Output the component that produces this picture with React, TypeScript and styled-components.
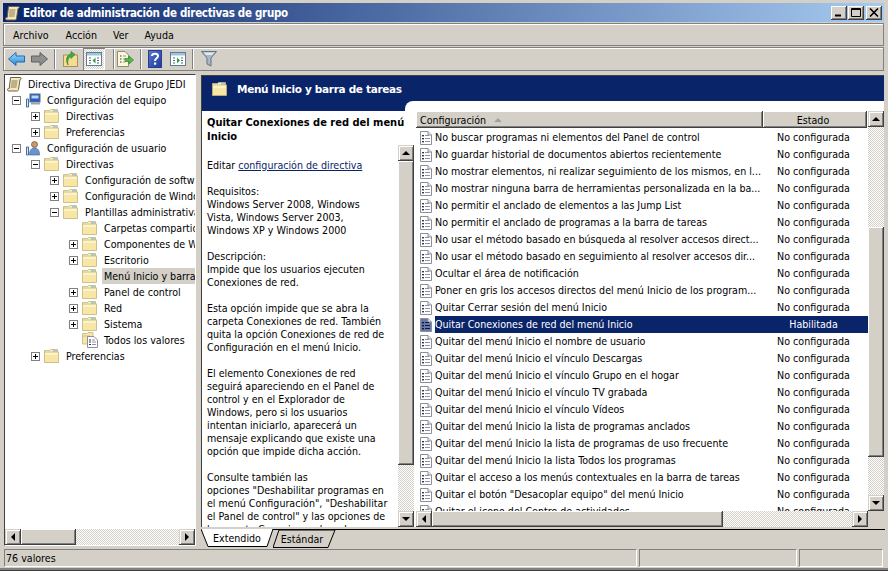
import React, { ReactElement } from 'react'
import styled, { createGlobalStyle } from 'styled-components'

const FACE = '#d4d0c8'
const NAVY = '#0a246a'
const UI_FONT = '"DejaVu Sans Condensed", "DejaVu Sans", sans-serif'

const GlobalStyle = createGlobalStyle`
    html, body {
        margin: 0;
        padding: 0;
        background: ${FACE};
    }
    * {
        box-sizing: border-box;
    }
`

const Window = styled.div`
    width: 888px;
    height: 571px;
    display: flex;
    flex-direction: column;
    padding: 3px 4px 3px 3px;
    background: ${FACE};
    border-bottom: 1px solid #404040;
    box-shadow: inset 0 -2px 0 #808080;
    font: 10.6px ${UI_FONT};
    color: #000;
    overflow: hidden;
`
const TitleBar = styled.div`
    flex: none;
    height: 19px;
    display: flex;
    align-items: center;
    padding: 0 2px 0 2px;
    gap: 3px;
    background: linear-gradient(90deg, ${NAVY} 0%, #a6caf0 100%);
`
const TitleText = styled.div`
    flex: 1;
    color: #fff;
    font: bold 11.5px ${UI_FONT};
    letter-spacing: -0.3px;
    white-space: nowrap;
`
const CaptionGroup = styled.div`
    display: flex;
    gap: ${(props: { $gap?: number }): string => (props.$gap || 1) + 'px'};
`
const CaptionButton = styled.div`
    width: 16px;
    height: 14px;
    display: flex;
    align-items: center;
    justify-content: center;
    background: ${FACE};
    box-shadow: inset -1px -1px 0 #404040, inset 1px 1px 0 #fff, inset -2px -2px 0 #808080;
`
const Band = styled.div`
    flex: none;
    height: ${(props: { $h: number }): string => props.$h + 'px'};
    margin-top: ${(props: { $mt?: number }): string => (props.$mt || 0) + 'px'};
    display: flex;
    align-items: center;
    border: 1px solid #808080;
    box-shadow: inset 0 1px 0 #fff, inset 1px 0 0 #fff;
`
const MenuItem = styled.div`
    margin-left: ${(props: { $ml: number }): string => props.$ml + 'px'};
`
const ToolSlot = styled.div`
    flex: none;
    height: 22px;
    width: ${(props: { $w: number }): string => props.$w + 'px'};
    margin-left: ${(props: { $ml?: number }): string => (props.$ml || 0) + 'px'};
    display: flex;
    align-items: center;
    justify-content: center;
`
const PressedSlot = styled(ToolSlot)`
    background: repeating-conic-gradient(${FACE} 0 25%, #fff 0 50%) 0 0 / 2px 2px;
    box-shadow: inset 1px 1px 0 #808080, inset -1px -1px 0 #fff;
`
const ToolSep = styled.div`
    flex: none;
    width: 1px;
    height: 20px;
    margin-left: ${(props: { $ml: number }): string => props.$ml + 'px'};
    background: #808080;
    box-shadow: 1px 0 0 #fff;
`
const Main = styled.div`
    flex: 1;
    min-height: 0;
    margin-top: 3px;
    display: flex;
    gap: 5px;
    padding-left: 1px;
`
const TreePane = styled.div`
    flex: none;
    width: 192px;
    margin-bottom: 1px;
    display: flex;
    flex-direction: column;
    border: 1px solid #404040;
    border-right-color: #fff;
    border-bottom-color: #fff;
    background: #fff;
`
const TreeBody = styled.div`
    flex: 1;
    min-height: 0;
    overflow: hidden;
    padding-top: 1px;
`
const TreeRow = styled.div`
    height: 16px;
    display: flex;
    align-items: center;
    white-space: nowrap;
    padding-left: ${(props: { $pad: number }): string => props.$pad + 'px'};
`
const ExpandBox = styled.div`
    flex: none;
    width: 9px;
    height: 9px;
    margin-right: 4px;
    border: 1px solid #808080;
    position: relative;
    visibility: ${(props: { $hidden: boolean }): string => (props.$hidden ? 'hidden' : 'visible')};
    &::before {
        content: '';
        position: absolute;
        left: 1px;
        top: 3px;
        width: 5px;
        height: 1px;
        background: #000;
    }
    &::after {
        content: '';
        display: ${(props: { $open: boolean }): string => (props.$open ? 'none' : 'block')};
        position: absolute;
        left: 3px;
        top: 1px;
        width: 1px;
        height: 5px;
        background: #000;
    }
`
const TreeLabel = styled.span`
    margin-left: 4px;
    padding: 1px 2px;
    line-height: 14px;
    background: ${(props: { $active: boolean }): string => (props.$active ? FACE : 'transparent')};
    flex: ${(props: { $active: boolean }): string => (props.$active ? '1' : 'none')};
`
const RightPane = styled.div`
    flex: 1;
    min-width: 0;
    display: flex;
    flex-direction: column;
`
const Content = styled.div`
    flex: 1;
    min-height: 0;
    display: flex;
    flex-direction: column;
    border: 1px solid #404040;
    border-bottom: none;
    border-right: none;
    margin: 1px 0 2px;
    background: #fff;
`
const Banner = styled.div`
    flex: none;
    background: ${NAVY};
    display: flex;
    flex-direction: column;
`
const BannerTitle = styled.div`
    height: 25px;
    display: flex;
    align-items: center;
    padding-left: 10px;
    gap: 9px;
    color: #fff;
    font: bold 10.5px "DejaVu Sans", sans-serif;
    letter-spacing: -0.32px;
`
const BannerNotch = styled.div`
    height: 10px;
    margin-left: 203px;
    background: #fff;
    border-top-left-radius: 8px;
`
const Panes = styled.div`
    flex: 1;
    min-height: 0;
    display: flex;
`
const Description = styled.div`
    flex: none;
    width: 212px;
    margin-top: -5px;
    display: flex;
    flex-direction: column;
`
const DescTitle = styled.div`
    flex: none;
    height: 39px;
    padding: 10px 0 0 5px;
    font: bold 11px/14px ${UI_FONT};
    white-space: nowrap;
`
const DescRow = styled.div`
    flex: 1;
    min-height: 0;
    display: flex;
`
const DescText = styled.div`
    flex: 1;
    min-width: 0;
    overflow: hidden;
    padding: 14px 0 0 5px;
    line-height: 13px;
    white-space: nowrap;
`
const Para = styled.div`
    margin: 0 0 13px;
`
const PolicyLink = styled.span`
    color: ${NAVY};
    text-decoration: underline;
`
const ScrollV = styled.div`
    flex: none;
    width: 16px;
    display: flex;
    flex-direction: column;
`
const ScrollH = styled.div`
    flex: ${(props: { $grow?: boolean }): string => (props.$grow ? '1' : 'none')};
    height: 16px;
    display: flex;
`
const Track = styled.div`
    flex: ${(props: { $size?: number }): string => (props.$size ? 'none' : '1')};
    height: ${(props: { $size?: number }): string => (props.$size ? props.$size + 'px' : 'auto')};
    background: repeating-conic-gradient(${FACE} 0 25%, #fff 0 50%) 0 0 / 2px 2px;
`
const Thumb = styled.div`
    flex: none;
    height: ${(props: { $size: number; $v?: boolean }): string => (props.$v ? props.$size + 'px' : 'auto')};
    width: ${(props: { $size: number; $v?: boolean }): string => (props.$v ? 'auto' : props.$size + 'px')};
    background: ${FACE};
    box-shadow: inset -1px -1px 0 #404040, inset 1px 1px 0 #fff, inset -2px -2px 0 #808080;
`
const ArrowButton = styled.div`
    flex: none;
    width: 16px;
    height: 16px;
    display: flex;
    align-items: center;
    justify-content: center;
    background: ${FACE};
    box-shadow: inset -1px -1px 0 #404040, inset 1px 1px 0 #d4d0c8, inset 2px 2px 0 #fff, inset -2px -2px 0 #808080;
`
const ListPane = styled.div`
    flex: 1;
    min-width: 0;
    display: flex;
    flex-direction: column;
    margin-left: 2px;
`
const ListGrid = styled.div`
    flex: 1;
    min-height: 0;
    display: flex;
`
const ListColumn = styled.div`
    flex: 1;
    min-width: 0;
    display: flex;
    flex-direction: column;
`
const HeaderRow = styled.div`
    flex: none;
    height: 17px;
    display: flex;
`
const HeaderCell = styled.div`
    flex: ${(props: { $w: number }): string => '0 0 ' + props.$w + 'px'};
    display: flex;
    align-items: center;
    gap: 8px;
    padding: ${(props: { $w: number; $center?: boolean }): string => (props.$center ? '0 4px 0 0' : '0 0 0 4px')};
    justify-content: ${(props: { $w: number; $center?: boolean }): string => (props.$center ? 'center' : 'flex-start')};
    background: ${FACE};
    box-shadow: inset -1px -1px 0 #404040, inset 1px 1px 0 #fff, inset -2px -2px 0 #808080;
`
const ListBody = styled.div`
    flex: 1;
    min-height: 0;
    overflow: hidden;
    padding-top: 1px;
`
const PolicyRow = styled.div`
    height: 17px;
    display: flex;
    align-items: center;
    white-space: nowrap;
`
const PolicyIconCell = styled.div`
    flex: none;
    width: 19px;
    padding-left: 4px;
    display: flex;
`
const PolicyName = styled.div`
    flex: none;
    width: 328px;
    line-height: 17px;
    overflow: hidden;
    background: ${(props: { $sel: boolean }): string => (props.$sel ? NAVY : 'transparent')};
    color: ${(props: { $sel: boolean }): string => (props.$sel ? '#fff' : '#000')};
`
const PolicyState = styled.div`
    flex: 1;
    text-align: center;
    padding-right: 4px;
    line-height: 17px;
    background: ${(props: { $sel: boolean }): string => (props.$sel ? NAVY : 'transparent')};
    color: ${(props: { $sel: boolean }): string => (props.$sel ? '#fff' : '#000')};
`
const ListBottom = styled.div`
    flex: none;
    display: flex;
`
const Corner = styled.div`
    flex: none;
    width: 16px;
    background: ${FACE};
`
const TabStrip = styled.div`
    flex: none;
    height: 18px;
    display: flex;
    margin-right: -1px;
    border-top: 1px solid #000;
`
const Tab = styled.div`
    position: relative;
    flex: none;
    width: ${(props: { $w: number; $ml?: number; $front?: boolean }): string => props.$w + 'px'};
    margin-top: ${(props: { $w: number; $ml?: number; $front?: boolean }): string => (props.$front ? '-1px' : '0')};
    margin-left: ${(props: { $w: number; $ml?: number; $front?: boolean }): string => (props.$ml || 0) + 'px'};
    height: 18px;
    z-index: ${(props: { $w: number; $ml?: number; $front?: boolean }): string => (props.$front ? '2' : '1')};
`
const TabShape = styled.svg`
    position: absolute;
    left: 0;
    top: 0;
`
const TabLabel = styled.div`
    position: relative;
    text-align: center;
    line-height: 18px;
    padding-right: ${(props: { $pr?: number }): string => (props.$pr || 0) + 'px'};
`
const StatusBar = styled.div`
    flex: none;
    height: 18px;
    margin: 2px 0 0 1px;
    display: flex;
    gap: 2px;
`
const StatusCell = styled.div`
    flex: ${(props: { $w: number }): string => '0 0 ' + props.$w + 'px'};
    padding-left: 1px;
    line-height: 17px;
    border: 1px solid #808080;
    border-right-color: #fff;
    border-bottom-color: #fff;
`

/* iconos */
const Tri = ({ dir }: { dir: 'up' | 'down' | 'left' | 'right' }): ReactElement => {
    const points = {
        up: '0,4 8,4 4,0',
        down: '0,0 8,0 4,4',
        left: '4,0 4,8 0,4',
        right: '0,0 0,8 4,4',
    }[dir]
    const vertical = dir === 'up' || dir === 'down'
    return (
        <svg width={vertical ? 8 : 4} height={vertical ? 4 : 8} viewBox={vertical ? '0 0 8 4' : '0 0 4 8'}>
            <polygon points={points} fill="#000" />
        </svg>
    )
}
const FolderIcon = (): ReactElement => (
    <svg width="15" height="14" viewBox="0 0 15 14" style={{ flex: 'none', marginRight: 1 }}>
        <path d="M0.5 3.5V1.5H5.5L6.5 0.5H13.5V3.5Z" fill="#fbf0c4" stroke="#c4b57c" strokeWidth="0.8" />
        <rect x="9" y="1.2" width="4" height="1.4" fill="#8fbce4" />
        <rect x="0.5" y="3" width="14" height="10.5" fill="#f8e6a4" stroke="#c4b57c" strokeWidth="0.8" />
        <rect x="1.3" y="3.8" width="12.4" height="2" fill="#fdf5d0" />
    </svg>
)
const PolicyIcon = ({ sel }: { sel: boolean }): ReactElement => (
    <svg width="12" height="14" viewBox="0 0 12 14">
        <path d="M0.5 0.5H8L11.5 4V13.5H0.5Z" fill={sel ? '#6a78a8' : '#fff'} stroke="#8a8f98" />
        <path d="M8 0.5V4H11.5" fill="#e8e8e8" stroke="#8a8f98" />
        <g fill={sel ? '#0a1a4a' : '#30384a'}>
            <rect x="2" y="4" width="2" height="1.4" />
            <rect x="2" y="7" width="2" height="1.4" />
            <rect x="2" y="10" width="2" height="1.4" />
        </g>
        <g fill={sel ? '#0a1a4a' : '#8a94a8'}>
            <rect x="5" y="4" width="4" height="1" />
            <rect x="5" y="7" width="5" height="1" />
            <rect x="5" y="10" width="5" height="1" />
        </g>
    </svg>
)
const ScrollDocIcon = (): ReactElement => (
    <svg width="15" height="16" viewBox="0 0 15 16" style={{ flex: 'none' }}>
        <path d="M3.5 1.5H13.5C14.5 1.5 14.5 3.5 13 3.5L11.5 13.5C11.5 15 10 15 9.5 15H2C0 15 0 12.5 1.5 12.5H2.2Z" fill="#f4e7bd" stroke="#6a6048" />
        <path d="M4.5 5H10.5M4.2 7H10.2M4 9H10M3.7 11H9.5" stroke="#8a7a50" />
    </svg>
)
const ComputerIcon = (): ReactElement => (
    <svg width="16" height="15" viewBox="0 0 16 15" style={{ flex: 'none' }}>
        <rect x="5" y="1" width="10" height="8" fill="#2a5fc0" stroke="#5b6b80" />
        <rect x="6.5" y="2.5" width="7" height="3" fill="#b8d8f8" />
        <rect x="6" y="9.5" width="9" height="2" fill="#9aa4b0" />
        <path d="M1.5 6H3.5V14H1.5Z" fill="#dfe6ee" stroke="#3a6ea8" />
    </svg>
)
const UserIcon = (): ReactElement => (
    <svg width="16" height="16" viewBox="0 0 16 16" style={{ flex: 'none' }}>
        <path d="M1.5 7H3.5V15H1.5Z" fill="#dfe6ee" stroke="#3a6ea8" />
        <circle cx="9.5" cy="4.5" r="3" fill="#c89a68" stroke="#6a5038" strokeWidth="0.7" />
        <path d="M4.5 15C4.5 10 6.5 8 9.5 8C12.5 8 14.5 10 14.5 15Z" fill="#6f93c8" stroke="#4a6898" strokeWidth="0.7" />
    </svg>
)
const AllValuesIcon = (): ReactElement => (
    <svg width="18" height="16" viewBox="0 0 18 16" style={{ flex: 'none', marginRight: -2 }}>
        <path d="M0.5 6V1.5H5L6 0.5H11V6Z" fill="#f8e6a4" stroke="#c4b57c" strokeWidth="0.8" />
        <path d="M0.5 4H8V12H0.5Z" fill="#f8e6a4" stroke="#c4b57c" strokeWidth="0.8" />
        <path d="M5.5 4.5H12L15.5 8V15.5H5.5Z" fill="#fff" stroke="#8a8f98" />
        <path d="M7 8H9M7 10H9M7 12.5H9" stroke="#30384a" />
        <path d="M10 8H13M10 10H14M10 12.5H14" stroke="#8a94a8" />
    </svg>
)
const BackIcon = (): ReactElement => (
    <svg width="17" height="14" viewBox="0 0 17 14">
        <defs>
            <linearGradient id="blueArrow" x1="0" y1="0" x2="0" y2="1">
                <stop offset="0" stopColor="#a8dcfa" />
                <stop offset="1" stopColor="#1f86d8" />
            </linearGradient>
        </defs>
        <path d="M0.5 7L8 0.5V4H16.5V10H8V13.5Z" fill="url(#blueArrow)" stroke="#1c6ab0" />
    </svg>
)
const ForwardIcon = (): ReactElement => (
    <svg width="17" height="14" viewBox="0 0 17 14">
        <path d="M16.5 7L9 0.5V4H0.5V10H9V13.5Z" fill="#8f8f8f" stroke="#5f5f5f" />
    </svg>
)
const UpFolderIcon = (): ReactElement => (
    <svg width="15" height="16" viewBox="0 0 15 16">
        <rect x="0.5" y="4" width="14" height="11.5" fill="#f4dc90" stroke="#a89458" />
        <path d="M5 14C4 9 6 6 8 5.5V7.5L12 3.5L8 0.5V3C4 3.5 2 9 5 14Z" fill="#3fae3f" stroke="#2a7a2a" strokeWidth="0.6" />
    </svg>
)
const PaneHideIcon = ({ showRight }: { showRight?: boolean }): ReactElement => (
    <svg width="16" height="14" viewBox="0 0 16 14">
        <rect x="0.5" y="0.5" width="15" height="13" fill="#fff" stroke="#5f7f90" />
        <rect x="1" y="1" width="14" height="2.5" fill="#9fc3d8" />
        <path d="M3 6H5M3 8.5H5M3 11H5" stroke="#4a6a88" />
        <path d="M11 6H13M11 8.5H13M11 11H13" stroke="#4a6a88" />
        {showRight
            ? <polygon points="7,5.5 7,11.5 10,8.5" fill="#2e9e3e" />
            : <polygon points="9.5,5.5 9.5,11.5 6.5,8.5" fill="#2e9e3e" />}
    </svg>
)
const ExportIcon = (): ReactElement => (
    <svg width="17" height="16" viewBox="0 0 17 16">
        <path d="M0.5 0.5H8L11.5 4V15.5H0.5Z" fill="#fdf6d8" stroke="#8a8f70" />
        <path d="M3 5H4.5M3 8H4.5M3 11H4.5" stroke="#30384a" />
        <path d="M6 5H9M6 8H9M6 11H8" stroke="#8a94a8" />
        <path d="M8 7.5H12V5L16.5 9L12 13V10.5H8Z" fill="#58b848" stroke="#2f8030" strokeWidth="0.7" />
    </svg>
)
const HelpIcon = (): ReactElement => (
    <svg width="14" height="18" viewBox="0 0 14 18">
        <defs>
            <linearGradient id="helpBg" x1="0" y1="0" x2="1" y2="1">
                <stop offset="0" stopColor="#5a78d0" />
                <stop offset="1" stopColor="#1c3a98" />
            </linearGradient>
        </defs>
        <rect x="0.5" y="0.5" width="13" height="17" fill="url(#helpBg)" stroke="#24408c" />
        <path d="M4 6C4 3 10 3 10 6C10 8.5 7 8 7 11" fill="none" stroke="#fff" strokeWidth="2" />
        <rect x="6" y="12.5" width="2.2" height="2.2" fill="#fff" />
    </svg>
)
const FilterIcon = (): ReactElement => (
    <svg width="16" height="16" viewBox="0 0 16 16">
        <path d="M0.5 0.5H15.5L10 7V15L6 13V7Z" fill="#a8b8c4" stroke="#5f7484" />
        <path d="M2.5 1.5H13.5L11 4H5Z" fill="#dfe8ee" />
    </svg>
)
const MinGlyph = (): ReactElement => (
    <svg width="10" height="9" viewBox="0 0 10 9"><rect x="1" y="6.5" width="6" height="2" fill="#000" /></svg>
)
const MaxGlyph = (): ReactElement => (
    <svg width="10" height="9" viewBox="0 0 10 9"><path d="M0.5 0.5H9.5V8.5H0.5ZM0.5 1.5H9.5" fill="none" stroke="#000" /></svg>
)
const CloseGlyph = (): ReactElement => (
    <svg width="10" height="9" viewBox="0 0 10 9"><path d="M1 0.5L9 8.5M9 0.5L1 8.5" stroke="#000" strokeWidth="1.6" /></svg>
)

/* datos */
interface TreeNode {
    label: string;
    level: number;
    box?: 'open' | 'closed';
    icon: 'folder' | 'doc' | 'computer' | 'user' | 'all';
    active?: boolean;
}
const treeNodes: TreeNode[] = [
    { label: 'Directiva Directiva de Grupo JEDI', level: -1, icon: 'doc' },
    { label: 'Configuración del equipo', level: 0, box: 'open', icon: 'computer' },
    { label: 'Directivas', level: 1, box: 'closed', icon: 'folder' },
    { label: 'Preferencias', level: 1, box: 'closed', icon: 'folder' },
    { label: 'Configuración de usuario', level: 0, box: 'open', icon: 'user' },
    { label: 'Directivas', level: 1, box: 'open', icon: 'folder' },
    { label: 'Configuración de software', level: 2, box: 'closed', icon: 'folder' },
    { label: 'Configuración de Windows', level: 2, box: 'closed', icon: 'folder' },
    { label: 'Plantillas administrativas', level: 2, box: 'open', icon: 'folder' },
    { label: 'Carpetas compartidas', level: 3, icon: 'folder' },
    { label: 'Componentes de Windows', level: 3, box: 'closed', icon: 'folder' },
    { label: 'Escritorio', level: 3, box: 'closed', icon: 'folder' },
    { label: 'Menú Inicio y barra de tareas', level: 3, icon: 'folder', active: true },
    { label: 'Panel de control', level: 3, box: 'closed', icon: 'folder' },
    { label: 'Red', level: 3, box: 'closed', icon: 'folder' },
    { label: 'Sistema', level: 3, box: 'closed', icon: 'folder' },
    { label: 'Todos los valores', level: 3, icon: 'all' },
    { label: 'Preferencias', level: 1, box: 'closed', icon: 'folder' },
]

const policies: string[] = [
    'No buscar programas ni elementos del Panel de control',
    'No guardar historial de documentos abiertos recientemente',
    'No mostrar elementos, ni realizar seguimiento de los mismos, en l...',
    'No mostrar ninguna barra de herramientas personalizada en la ba...',
    'No permitir el anclado de elementos a las Jump List',
    'No permitir el anclado de programas a la barra de tareas',
    'No usar el método basado en búsqueda al resolver accesos direct...',
    'No usar el método basado en seguimiento al resolver accesos dir...',
    'Ocultar el área de notificación',
    'Poner en gris los accesos directos del menú Inicio de los program...',
    'Quitar Cerrar sesión del menú Inicio',
    'Quitar Conexiones de red del menú Inicio',
    'Quitar del menú Inicio el nombre de usuario',
    'Quitar del menú Inicio el vínculo Descargas',
    'Quitar del menú Inicio el vínculo Grupo en el hogar',
    'Quitar del menú Inicio el vínculo TV grabada',
    'Quitar del menú Inicio el vínculo Vídeos',
    'Quitar del menú Inicio la lista de programas anclados',
    'Quitar del menú Inicio la lista de programas de uso frecuente',
    'Quitar del menú Inicio la lista Todos los programas',
    'Quitar el acceso a los menús contextuales en la barra de tareas',
    'Quitar el botón "Desacoplar equipo" del menú Inicio',
    'Quitar el icono del Centro de actividades',
]

const descParagraphs: string[][] = [
    ['Requisitos:', 'Windows Server 2008, Windows', 'Vista, Windows Server 2003,', 'Windows XP y Windows 2000'],
    ['Descripción:', 'Impide que los usuarios ejecuten', 'Conexiones de red.'],
    ['Esta opción impide que se abra la', 'carpeta Conexiones de red. También', 'quita la opción Conexiones de red de', 'Configuración en el menú Inicio.'],
    ['El elemento Conexiones de red', 'seguirá apareciendo en el Panel de', 'control y en el Explorador de', 'Windows, pero si los usuarios', 'intentan iniciarlo, aparecerá un', 'mensaje explicando que existe una', 'opción que impide dicha acción.'],
    ['Consulte también las', 'opciones "Deshabilitar programas en', 'el menú Configuración", "Deshabilitar', 'el Panel de control" y las opciones de', 'la carpeta Conexiones de red.'],
]

const treeIcon = (icon: TreeNode['icon']): ReactElement => {
    if (icon === 'doc') return <ScrollDocIcon />
    if (icon === 'computer') return <ComputerIcon />
    if (icon === 'user') return <UserIcon />
    if (icon === 'all') return <AllValuesIcon />
    return <FolderIcon />
}

const App = (): ReactElement => {
    const tree = treeNodes.map((node, index): JSX.Element => (
        <TreeRow key={index} $pad={node.level < 0 ? 2 : 7 + node.level * 19}>
            {node.level >= 0 && <ExpandBox $hidden={!node.box} $open={node.box === 'open'} />}
            {treeIcon(node.icon)}
            <TreeLabel $active={!!node.active}>{node.label}</TreeLabel>
        </TreeRow>
    ))

    const rows = policies.map((name, index): JSX.Element => {
        const sel = index === 11
        return (
            <PolicyRow key={index}>
                <PolicyIconCell><PolicyIcon sel={sel} /></PolicyIconCell>
                <PolicyName $sel={sel}>{name}</PolicyName>
                <PolicyState $sel={sel}>{sel ? 'Habilitada' : 'No configurada'}</PolicyState>
            </PolicyRow>
        )
    })

    return (
        <Window>
            <GlobalStyle />
            <TitleBar>
                <ScrollDocIcon />
                <TitleText>Editor de administración de directivas de grupo</TitleText>
                <CaptionGroup $gap={2}>
                    <CaptionGroup>
                        <CaptionButton><MinGlyph /></CaptionButton>
                        <CaptionButton><MaxGlyph /></CaptionButton>
                    </CaptionGroup>
                    <CaptionButton><CloseGlyph /></CaptionButton>
                </CaptionGroup>
            </TitleBar>
            <Band $h={23} $mt={1}>
                <MenuItem $ml={9}>Archivo</MenuItem>
                <MenuItem $ml={17}>Acción</MenuItem>
                <MenuItem $ml={16}>Ver</MenuItem>
                <MenuItem $ml={16}>Ayuda</MenuItem>
            </Band>
            <Band $h={24} $mt={1}>
                <ToolSlot $w={17} $ml={4}><BackIcon /></ToolSlot>
                <ToolSlot $w={17} $ml={6}><ForwardIcon /></ToolSlot>
                <ToolSep $ml={6} />
                <ToolSlot $w={15} $ml={8}><UpFolderIcon /></ToolSlot>
                <PressedSlot $w={22} $ml={5}><PaneHideIcon /></PressedSlot>
                <ToolSep $ml={8} />
                <ToolSlot $w={17} $ml={3}><ExportIcon /></ToolSlot>
                <ToolSep $ml={6} />
                <ToolSlot $w={14} $ml={7}><HelpIcon /></ToolSlot>
                <ToolSlot $w={16} $ml={8}><PaneHideIcon showRight /></ToolSlot>
                <ToolSep $ml={6} />
                <ToolSlot $w={16} $ml={8}><FilterIcon /></ToolSlot>
            </Band>
            <Main>
                <TreePane>
                    <TreeBody>{tree}</TreeBody>
                    <ScrollH>
                        <ArrowButton><Tri dir="left" /></ArrowButton>
                        <Thumb $size={55} />
                        <Track />
                        <ArrowButton><Tri dir="right" /></ArrowButton>
                    </ScrollH>
                </TreePane>
                <RightPane>
                    <Content>
                        <Banner>
                            <BannerTitle>
                                <FolderIcon />
                                Menú Inicio y barra de tareas
                            </BannerTitle>
                            <BannerNotch />
                        </Banner>
                        <Panes>
                            <Description>
                                <DescTitle>Quitar Conexiones de red del menú<br />Inicio</DescTitle>
                                <DescRow>
                                    <DescText>
                                        <Para>Editar <PolicyLink>configuración de directiva</PolicyLink></Para>
                                        {descParagraphs.map((lines, index): JSX.Element => (
                                            <Para key={index}>
                                                {lines.map((line, lineIndex): JSX.Element => <div key={lineIndex}>{line}</div>)}
                                            </Para>
                                        ))}
                                    </DescText>
                                    <ScrollV>
                                        <ArrowButton><Tri dir="up" /></ArrowButton>
                                        <Thumb $v $size={304} />
                                        <Track />
                                        <ArrowButton><Tri dir="down" /></ArrowButton>
                                    </ScrollV>
                                </DescRow>
                            </Description>
                            <ListPane>
                                <ListGrid>
                                    <ListColumn>
                                        <HeaderRow>
                                            <HeaderCell $w={347}>
                                                Configuración
                                                <svg width="8" height="4" viewBox="0 0 8 4"><polygon points="0,4 8,4 4,0" fill="#a0a0a0" /></svg>
                                            </HeaderCell>
                                            <HeaderCell $w={104} $center>Estado</HeaderCell>
                                        </HeaderRow>
                                        <ListBody>{rows}</ListBody>
                                    </ListColumn>
                                    <ScrollV>
                                        <ArrowButton><Tri dir="up" /></ArrowButton>
                                        <Track $size={100} />
                                        <Thumb $v $size={230} />
                                        <Track />
                                        <ArrowButton><Tri dir="down" /></ArrowButton>
                                    </ScrollV>
                                </ListGrid>
                                <ListBottom>
                                    <ScrollH $grow>
                                        <ArrowButton><Tri dir="left" /></ArrowButton>
                                        <Thumb $size={291} />
                                        <Track />
                                        <ArrowButton><Tri dir="right" /></ArrowButton>
                                    </ScrollH>
                                    <Corner />
                                </ListBottom>
                            </ListPane>
                        </Panes>
                    </Content>
                    <TabStrip>
                        <Tab $w={74} $front>
                            <TabShape width="74" height="18" viewBox="0 0 74 18">
                                <path d="M0 0L7 17.5H66L72 0" fill="#fff" stroke="#000" />
                            </TabShape>
                            <TabLabel $pr={2}>Extendido</TabLabel>
                        </Tab>
                        <Tab $w={64} $ml={-2}>
                            <TabShape width="64" height="18" viewBox="0 0 64 18">
                                <path d="M0 17.5H55L62 0H6Z" fill={FACE} stroke="#000" />
                            </TabShape>
                            <TabLabel $pr={6}>Estándar</TabLabel>
                        </Tab>
                    </TabStrip>
                </RightPane>
            </Main>
            <StatusBar>
                <StatusCell $w={633}>76 valores</StatusCell>
                <StatusCell $w={158} />
                <StatusCell $w={84} />
            </StatusBar>
        </Window>
    )
}

export default App
